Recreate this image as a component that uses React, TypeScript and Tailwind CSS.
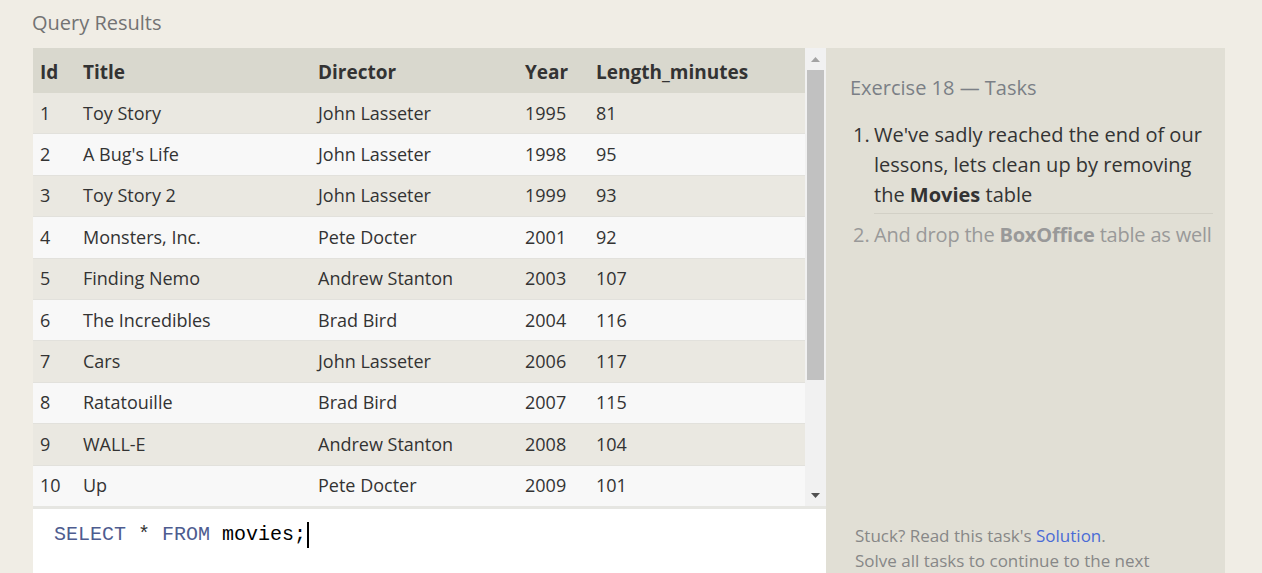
const rows = [
  [1, "Toy Story", "John Lasseter", 1995, 81],
  [2, "A Bug's Life", "John Lasseter", 1998, 95],
  [3, "Toy Story 2", "John Lasseter", 1999, 93],
  [4, "Monsters, Inc.", "Pete Docter", 2001, 92],
  [5, "Finding Nemo", "Andrew Stanton", 2003, 107],
  [6, "The Incredibles", "Brad Bird", 2004, 116],
  [7, "Cars", "John Lasseter", 2006, 117],
  [8, "Ratatouille", "Brad Bird", 2007, 115],
  [9, "WALL-E", "Andrew Stanton", 2008, 104],
  [10, "Up", "Pete Docter", 2009, 101],
];

function Scrollbar() {
  return (
    <div className="w-[21px] bg-[#f1f1f1] flex flex-col items-center">
      <div className="h-[22px] flex items-center justify-center">
        <svg width="9" height="5" viewBox="0 0 9 5"><path d="M0 5 L4.5 0 L9 5 Z" fill="#a3a3a3" /></svg>
      </div>
      <div className="w-[17px] h-[310px] bg-[#c1c1c1]" />
      <div className="flex-1" />
      <div className="h-[22px] flex items-center justify-center">
        <svg width="9" height="5" viewBox="0 0 9 5"><path d="M0 0 L4.5 5 L9 0 Z" fill="#505050" /></svg>
      </div>
    </div>
  );
}

export default function App() {
  return (
    <div className="w-[1262px] h-[573px] overflow-hidden bg-[#f0ede5] text-[#333]" style={{ fontFamily: '"Open Sans", "Noto Sans", sans-serif' }}>
      <div className="pl-[32px] pt-[8px] h-[48px] text-[20px] text-[#737373]">Query Results</div>
      <div className="flex pl-[33px]">
        <div className="w-[793px] flex flex-col">
          <div className="flex h-[461px] border-b-[3px] border-[#e6e6e2]">
            <div className="w-[772px] overflow-hidden text-[18px]">
              <div className="flex h-[45px] pt-[4px] items-center bg-[#d9d8ce] font-bold text-[19px]">
                <div className="w-[50px] pl-[7px]">Id</div>
                <div className="w-[235px]">Title</div>
                <div className="w-[207px]">Director</div>
                <div className="w-[71px]">Year</div>
                <div className="flex-1">Length_minutes</div>
              </div>
              {rows.map((r, i) => (
                <div key={i} className={`flex h-[41.4px] items-center border-b border-[#e2e1dc] ${i % 2 === 0 ? "bg-[#eae8e1]" : "bg-[#f8f8f8]"}`}>
                  <div className="w-[50px] pl-[7px]">{r[0]}</div>
                  <div className="w-[235px]">{r[1]}</div>
                  <div className="w-[207px]">{r[2]}</div>
                  <div className="w-[71px]">{r[3]}</div>
                  <div className="flex-1">{r[4]}</div>
                </div>
              ))}
            </div>
            <Scrollbar />
          </div>
          <div className="bg-white h-[70px] pl-[21px] pt-[14px] text-[20px] leading-[24px] flex items-start" style={{ fontFamily: '"Liberation Mono", "DejaVu Sans Mono", monospace' }}>
            <span className="text-[#4e5c8f]">SELECT</span>
            <span className="whitespace-pre"> * </span>
            <span className="text-[#4e5c8f]">FROM</span>
            <span className="whitespace-pre text-black"> movies;</span>
            <span className="w-[2px] h-[26px] bg-black ml-[1px] -mt-[1px]" />
          </div>
        </div>
        <div className="w-[399px] h-[525px] bg-[#e1dfd5] pl-[24px] pr-[4px] flex flex-col">
          <div className="pt-[25px] text-[20px] text-[#7b7f86]">Exercise 18 — Tasks</div>
          <ol className="mt-[17px] mr-[8px] text-[20px] leading-[30px]">
            <li className="flex text-[#333]">
              <span className="w-[24px] pl-[3px]">1.</span>
              <span className="flex-1 pr-[8px] pb-[3px] border-b border-[#d2d0c6]">We've sadly reached the end of our lessons, lets clean up by removing the <b>Movies</b> table</span>
            </li>
            <li className="flex pt-[6px] text-[#999] whitespace-nowrap">
              <span className="w-[24px] pl-[3px]">2.</span>
              <span className="tracking-[-0.2px]">And drop the <b>BoxOffice</b> table as well</span>
            </li>
          </ol>
          <div className="flex-1" />
          <div className="pl-[5px] text-[17px] leading-[25px] text-[#878787]">
            <div>Stuck? Read this task's <span className="text-[#4a6bd6]">Solution</span>.</div>
            <div>Solve all tasks to continue to the next</div>
          </div>
        </div>
      </div>
    </div>
  );
}
